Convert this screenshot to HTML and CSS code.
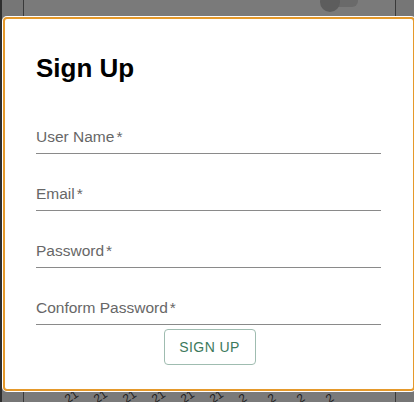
FILE: index.html
```html
<!DOCTYPE html>
<html>
<head>
<meta charset="utf-8">
<link rel="stylesheet" href="styles.css">
</head>
<body>
<div class="backdrop">
  <div class="panel">
    <div class="toggle"><span class="track"></span><span class="thumb"></span></div>
    <div class="ticks">
      <span>21</span><span>21</span><span>21</span><span>21</span><span>21</span><span>21</span><span>2</span><span>2</span><span>2</span><span>2</span>
    </div>
  </div>
</div>
<div class="dialog">
  <h2 class="title">Sign Up</h2>
  <form class="form">
    <label class="field"><span class="label">User Name<span class="req">*</span></span></label>
    <label class="field"><span class="label">Email<span class="req">*</span></span></label>
    <label class="field"><span class="label">Password<span class="req">*</span></span></label>
    <label class="field"><span class="label">Conform Password<span class="req">*</span></span></label>
    <div class="actions"><button type="button" class="btn">SIGN UP</button></div>
  </form>
</div>
</body>
</html>
```
FILE: styles.css
```css
html, body {
  margin: 0;
  padding: 0;
  width: 414px;
  height: 402px;
  overflow: hidden;
}
body {
  background: #767676;
  font-family: "Liberation Sans", Arial, sans-serif;
  position: relative;
}
.backdrop {
  height: 100%;
  border-left: 2px solid #2e2e2e;
  box-sizing: border-box;
  padding-left: 21px;
}
.panel {
  position: relative;
  width: 371px;
  height: 100%;
  border-left: 1px solid #3a3a3a;
  border-right: 1px solid #3a3a3a;
  background: #7a7a7a;
}
.toggle {
  position: absolute;
  left: 296px;
  top: -8px;
  width: 36px;
  height: 20px;
}
.track {
  position: absolute;
  left: 4px;
  top: 3px;
  width: 34px;
  height: 12px;
  border-radius: 6px;
  background: #6a6a6a;
}
.thumb {
  position: absolute;
  left: 0;
  top: 0;
  width: 20px;
  height: 20px;
  border-radius: 50%;
  background: #5d5d5d;
}
.ticks {
  position: absolute;
  left: 46px;
  top: 388px;
  display: flex;
}
.ticks span {
  width: 29px;
  font-size: 12px;
  line-height: 14px;
  color: #1e1e1e;
  transform: rotate(-35deg);
  transform-origin: left bottom;
  display: inline-block;
  padding-top: 4px;
}
.dialog {
  position: absolute;
  left: 3px;
  top: 17px;
  width: 412px;
  height: 374px;
  box-sizing: border-box;
  background: #fff;
  border: 2px solid #e5992b;
  border-radius: 4px;
  box-shadow: 0 0 0 1px #fff;
  padding: 34px 32px 0 31px;
}
.title {
  margin: 0;
  font-size: 26px;
  font-weight: 700;
  color: #000;
  line-height: 30px;
}
.form {
  display: flex;
  flex-direction: column;
  margin-top: 14px;
}
.field {
  display: flex;
  flex-direction: column;
  justify-content: flex-end;
  height: 57px;
}
.label {
  display: block;
  border-bottom: 1px solid #8a8a8a;
  padding-bottom: 7px;
  font-size: 15.5px;
  color: #676767;
  line-height: 18px;
}
.req {
  margin-left: 2px;
}
.actions {
  display: flex;
  justify-content: center;
  margin-top: 4px;
}
.btn {
  font-family: "Liberation Sans", Arial, sans-serif;
  font-size: 14px;
  letter-spacing: 0.4px;
  color: #3d7a5c;
  background: #fff;
  border: 1px solid #9fbcb0;
  border-radius: 4px;
  width: 92px;
  height: 36px;
  padding: 0;
  margin-left: 2px;
}
```
